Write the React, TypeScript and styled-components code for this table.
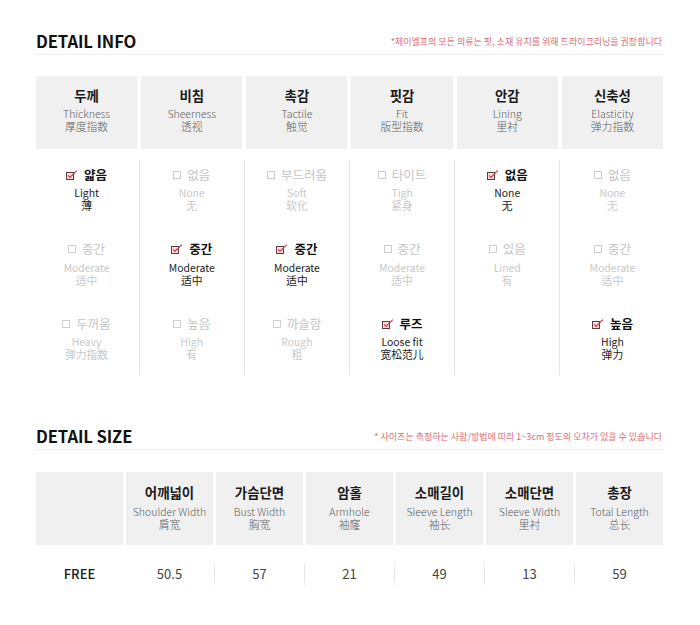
import React from "react";
import styled, { createGlobalStyle } from "styled-components";

const Global = createGlobalStyle`
  html, body { margin: 0; padding: 0; background: #fff; }
  body {
    font-family: "Noto Sans CJK KR", "Noto Sans", sans-serif;
    color: #222;
    -webkit-font-smoothing: antialiased;
  }
`;

const Page = styled.div`
  width: 627px;
  margin-left: 36px;
  padding-top: 31px;
`;

const Section = styled.section<{ $top?: number }>`
  margin-top: ${(p) => p.$top ?? 0}px;
`;

const SectionHead = styled.div`
  display: flex;
  justify-content: space-between;
  align-items: center;
  height: 20px;
  padding-bottom: 3px;
  border-bottom: 1px solid #ededed;
`;

const Title = styled.h2`
  margin: 0;
  font-size: 16.6px;
  line-height: 20px;
  font-weight: 700;
  color: #111;
  letter-spacing: -0.1px;
`;

const Note = styled.span`
  font-size: 9px;
  line-height: 12px;
  color: #dc6d74;
  padding-right: 1px;
  padding-top: 2px;
`;

const Grid = styled.div<{ $cols: number; $gap: number; $top?: number }>`
  display: grid;
  grid-template-columns: repeat(${(p) => p.$cols}, 1fr);
  column-gap: ${(p) => p.$gap}px;
  margin-top: ${(p) => p.$top ?? 0}px;
`;

const HeadCell = styled.div<{ $pad: number }>`
  height: 73px;
  box-sizing: border-box;
  padding-top: ${(p) => p.$pad}px;
  background: #f0f0f0;
  text-align: center;
`;

const HeadKo = styled.div`
  font-size: 13.4px;
  line-height: 20px;
  font-weight: 700;
  color: #1a1a1a;
  margin-bottom: 2.5px;
`;

const HeadEn = styled.div`
  font-size: 10.5px;
  line-height: 13px;
  font-weight: 300;
  color: #5e5e5e;
`;

const HeadZh = styled.div`
  font-size: 10.8px;
  line-height: 13px;
  font-weight: 300;
  color: #5e5e5e;
`;

const BodyColumn = styled.div<{ $gap: number }>`
  position: relative;
  display: flex;
  flex-direction: column;
  gap: 26.5px;
  padding: 4px 0 14px;
  & + &::before {
    content: "";
    position: absolute;
    top: 0;
    bottom: 0;
    left: ${(p) => -(p.$gap / 2) - 0.5}px;
    width: 1px;
    background: #e4e4e4;
  }
`;

const Option = styled.div<{ $on: boolean }>`
  height: 48px;
  text-align: center;
  color: ${(p) => (p.$on ? "#1a1a1a" : "#c9c9c9")};
`;

const OptLabel = styled.div<{ $on: boolean }>`
  display: flex;
  justify-content: center;
  align-items: center;
  gap: 6px;
  height: 20px;
  margin-bottom: 2px;
  font-size: 12.5px;
  font-weight: ${(p) => (p.$on ? 700 : 400)};
  color: ${(p) => (p.$on ? "#111" : "#c4c4c4")};
`;

const OptEn = styled.div`
  font-size: 10.4px;
  line-height: 13px;
`;

const OptZh = styled.div`
  font-size: 10.8px;
  line-height: 13px;
`;

const IconBox = styled.svg`
  display: block;
  flex: none;
  margin-top: 1px;
`;

const DataRow = styled.div`
  display: grid;
  grid-template-columns: repeat(7, 1fr);
  column-gap: 3px;
  padding-top: 15px;
`;

const DataCell = styled.div<{ $first?: boolean }>`
  position: relative;
  height: 28px;
  line-height: 28px;
  text-align: center;
  font-size: 13px;
  color: ${(p) => (p.$first ? "#1a1a1a" : "#444")};
  font-weight: ${(p) => (p.$first ? 500 : 400)};
  & + &::before {
    content: "";
    position: absolute;
    top: 0;
    bottom: 0;
    left: -2px;
    width: 1px;
    background: linear-gradient(to bottom, rgba(225,225,225,0), #e4e4e4 30%, #e4e4e4 70%, rgba(225,225,225,0));
  }
`;

const Checked = () => (
  <IconBox width="12" height="10" viewBox="0 0 12 10">
    <rect x="0.5" y="2.5" width="7" height="7" fill="#f4dede" stroke="#5e3c3f" strokeWidth="1" />
    <path d="M2.2 5.4 L3.9 7.4 L10.8 0.6" fill="none" stroke="#d2333c" strokeWidth="1.1" />
  </IconBox>
);

const Unchecked = () => (
  <IconBox width="8" height="8" viewBox="0 0 8 8">
    <rect x="0.5" y="0.5" width="7" height="7" fill="none" stroke="#cfcfcf" strokeWidth="1" />
  </IconBox>
);

type Opt = { ko: string; en: string; zh: string; on?: boolean };
type Attr = { ko: string; en: string; zh: string; opts: Opt[] };

const attrs: Attr[] = [
  {
    ko: "두께", en: "Thickness", zh: "厚度指数",
    opts: [
      { ko: "얇음", en: "Light", zh: "薄", on: true },
      { ko: "중간", en: "Moderate", zh: "适中" },
      { ko: "두꺼움", en: "Heavy", zh: "弹力指数" },
    ],
  },
  {
    ko: "비침", en: "Sheerness", zh: "透视",
    opts: [
      { ko: "없음", en: "None", zh: "无" },
      { ko: "중간", en: "Moderate", zh: "适中", on: true },
      { ko: "높음", en: "High", zh: "有" },
    ],
  },
  {
    ko: "촉감", en: "Tactile", zh: "触觉",
    opts: [
      { ko: "부드러움", en: "Soft", zh: "软化" },
      { ko: "중간", en: "Moderate", zh: "适中", on: true },
      { ko: "까슬함", en: "Rough", zh: "粗" },
    ],
  },
  {
    ko: "핏감", en: "Fit", zh: "版型指数",
    opts: [
      { ko: "타이트", en: "Tigh", zh: "紧身" },
      { ko: "중간", en: "Moderate", zh: "适中" },
      { ko: "루즈", en: "Loose fit", zh: "宽松范儿", on: true },
    ],
  },
  {
    ko: "안감", en: "Lining", zh: "里衬",
    opts: [
      { ko: "없음", en: "None", zh: "无", on: true },
      { ko: "있음", en: "Lined", zh: "有" },
    ],
  },
  {
    ko: "신축성", en: "Elasticity", zh: "弹力指数",
    opts: [
      { ko: "없음", en: "None", zh: "无" },
      { ko: "중간", en: "Moderate", zh: "适中" },
      { ko: "높음", en: "High", zh: "弹力", on: true },
    ],
  },
];

const sizes = [
  { ko: "어깨넓이", en: "Shoulder Width", zh: "肩宽", v: "50.5" },
  { ko: "가슴단면", en: "Bust Width", zh: "胸宽", v: "57" },
  { ko: "암홀", en: "Armhole", zh: "袖窿", v: "21" },
  { ko: "소매길이", en: "Sleeve Length", zh: "袖长", v: "49" },
  { ko: "소매단면", en: "Sleeve Width", zh: "里衬", v: "13" },
  { ko: "총장", en: "Total Length", zh: "总长", v: "59" },
];

export default function App() {
  return (
    <>
      <Global />
      <Page>
        <Section>
          <SectionHead>
            <Title>DETAIL INFO</Title>
            <Note>*제이엘프의 모든 의류는 핏, 소재 유지를 위해 드라이크리닝을 권장합니다</Note>
          </SectionHead>
          <Grid $cols={6} $gap={4} $top={21}>
            {attrs.map((a) => (
              <HeadCell key={a.en} $pad={8.5}>
                <HeadKo>{a.ko}</HeadKo>
                <HeadEn>{a.en}</HeadEn>
                <HeadZh>{a.zh}</HeadZh>
              </HeadCell>
            ))}
          </Grid>
          <Grid $cols={6} $gap={4} $top={11}>
            {attrs.map((a) => (
              <BodyColumn key={a.en} $gap={4}>
                {a.opts.map((o, i) => (
                  <Option key={i} $on={!!o.on}>
                    <OptLabel $on={!!o.on}>
                      {o.on ? <Checked /> : <Unchecked />}
                      <span>{o.ko}</span>
                    </OptLabel>
                    <OptEn>{o.en}</OptEn>
                    <OptZh>{o.zh}</OptZh>
                  </Option>
                ))}
              </BodyColumn>
            ))}
          </Grid>
        </Section>
        <Section $top={50.5}>
          <SectionHead>
            <Title>DETAIL SIZE</Title>
            <Note>* 사이즈는 측정하는 사람/방법에 따라 1~3cm 정도의 오차가 있을 수 있습니다</Note>
          </SectionHead>
          <Grid $cols={7} $gap={3} $top={22.5}>
            <HeadCell $pad={10} />
            {sizes.map((s) => (
              <HeadCell key={s.en} $pad={10}>
                <HeadKo>{s.ko}</HeadKo>
                <HeadEn>{s.en}</HeadEn>
                <HeadZh>{s.zh}</HeadZh>
              </HeadCell>
            ))}
          </Grid>
          <DataRow>
            <DataCell $first>FREE</DataCell>
            {sizes.map((s) => (
              <DataCell key={s.en}>{s.v}</DataCell>
            ))}
          </DataRow>
        </Section>
      </Page>
    </>
  );
}
